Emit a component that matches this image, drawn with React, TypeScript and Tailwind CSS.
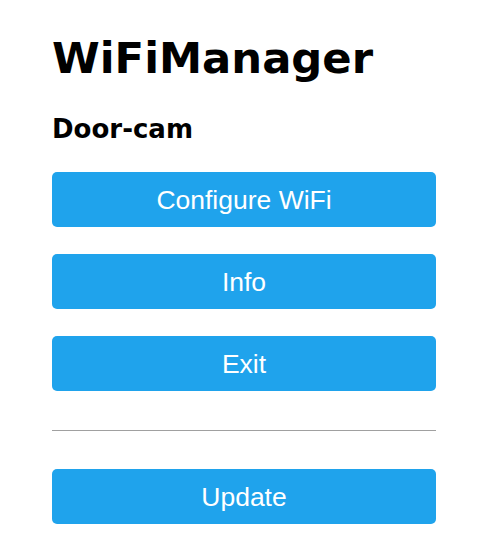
import React from "react";

const Btn = ({ label }: { label: string }) => (
  <button className="w-full h-[55px] rounded-[5px] bg-[#1fa3ec] text-white text-[26.5px] leading-[30px] font-['Liberation_Sans',Arial,sans-serif] flex items-center justify-center">
    {label}
  </button>
);

export default function App() {
  return (
    <div className="w-[504px] h-[555px] bg-white">
      <div className="ml-[52px] w-[384px] pt-[33px] flex flex-col">
        <h1 className="text-[43.3px] leading-[50px] font-bold text-black font-['DejaVu_Sans',Verdana,sans-serif]">
          WiFiManager
        </h1>
        <h3 className="mt-[31px] text-[26px] leading-[30px] font-bold text-black font-['DejaVu_Sans',Verdana,sans-serif]">
          Door-cam
        </h3>
        <div className="mt-[28px] flex flex-col gap-[27px]">
          <Btn label="Configure WiFi" />
          <Btn label="Info" />
          <Btn label="Exit" />
        </div>
        <hr className="mt-[39px] border-0 border-t border-[#a0a0a0]" />
        <div className="mt-[38px]">
          <Btn label="Update" />
        </div>
      </div>
    </div>
  );
}
